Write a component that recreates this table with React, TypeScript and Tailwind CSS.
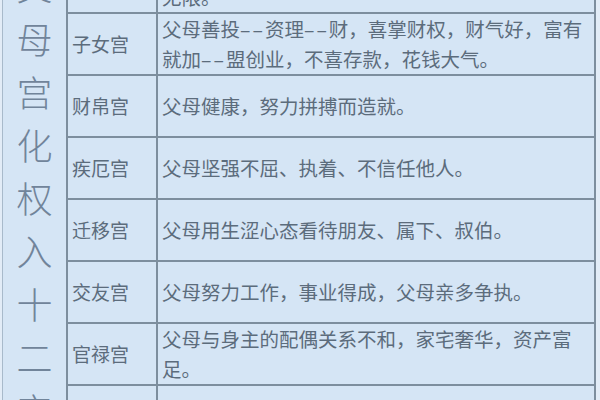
import type { ReactNode } from 'react';

const D = () => <span className="tracking-[2px]">––</span>;

const rows: { name: string; lines: ReactNode[] }[] = [
  { name: '夫妻宫', lines: ['父母感情和睦，对子女关爱有加，付出', '无限。'] },
  {
    name: '子女宫',
    lines: [
      <>父母善投<D />资理<D />财，喜掌财权，财气好，富有</>,
      <>就加<D />盟创业，不喜存款，花钱大气。</>,
    ],
  },
  { name: '财帛宫', lines: ['父母健康，努力拼搏而造就。'] },
  { name: '疾厄宫', lines: ['父母坚强不屈、执着、不信任他人。'] },
  { name: '迁移宫', lines: ['父母用生涩心态看待朋友、属下、叔伯。'] },
  { name: '交友宫', lines: ['父母努力工作，事业得成，父母亲多争执。'] },
  { name: '官禄宫', lines: ['父母与身主的配偶关系不和，家宅奢华，资产富', '足。'] },
  { name: '', lines: [] },
];

const title = '父母宫化权入十二宫'.split('');

export default function App() {
  return (
    <div
      className="w-[600px] h-[400px] overflow-hidden flex bg-[#e2ecf7] pl-[2px]"
      style={{ fontFamily: '"Noto Sans CJK SC", "Noto Sans", sans-serif' }}
    >
      {/* vertical title */}
      <div className="w-[66px] shrink-0 border-l border-[#a8bacb] border-r-2 border-r-[#7d8e9e] bg-[#d5e5f5] flex flex-col items-center">
        <div className="mt-[-41px] flex flex-col items-center text-[36px] leading-[53px] font-light text-[#71849a]">
          {title.map((c, i) => (
            <span key={i}>{c}</span>
          ))}
        </div>
      </div>

      {/* table */}
      <div className="w-[528px] shrink-0 border-r-2 border-[#7d8e9e] bg-[#d5e5f5]">
        <div className="mt-[-48px] flex flex-col">
          {rows.map((r, i) => (
            <div key={i} className="h-[62px] shrink-0 flex border-b-2 border-[#7d8e9e]">
              <div className="w-[90px] shrink-0 border-r-2 border-[#7d8e9e] flex items-center pl-[4px] text-[19px] text-[#5c6c7c]">
                {r.name}
              </div>
              <div className="flex-1 flex flex-col justify-center pl-[4px] text-[19.5px] leading-[30px] text-[#5c6c7c] whitespace-nowrap">
                {r.lines.map((l, j) => (
                  <div key={j}>{l}</div>
                ))}
              </div>
            </div>
          ))}
        </div>
      </div>
    </div>
  );
}
